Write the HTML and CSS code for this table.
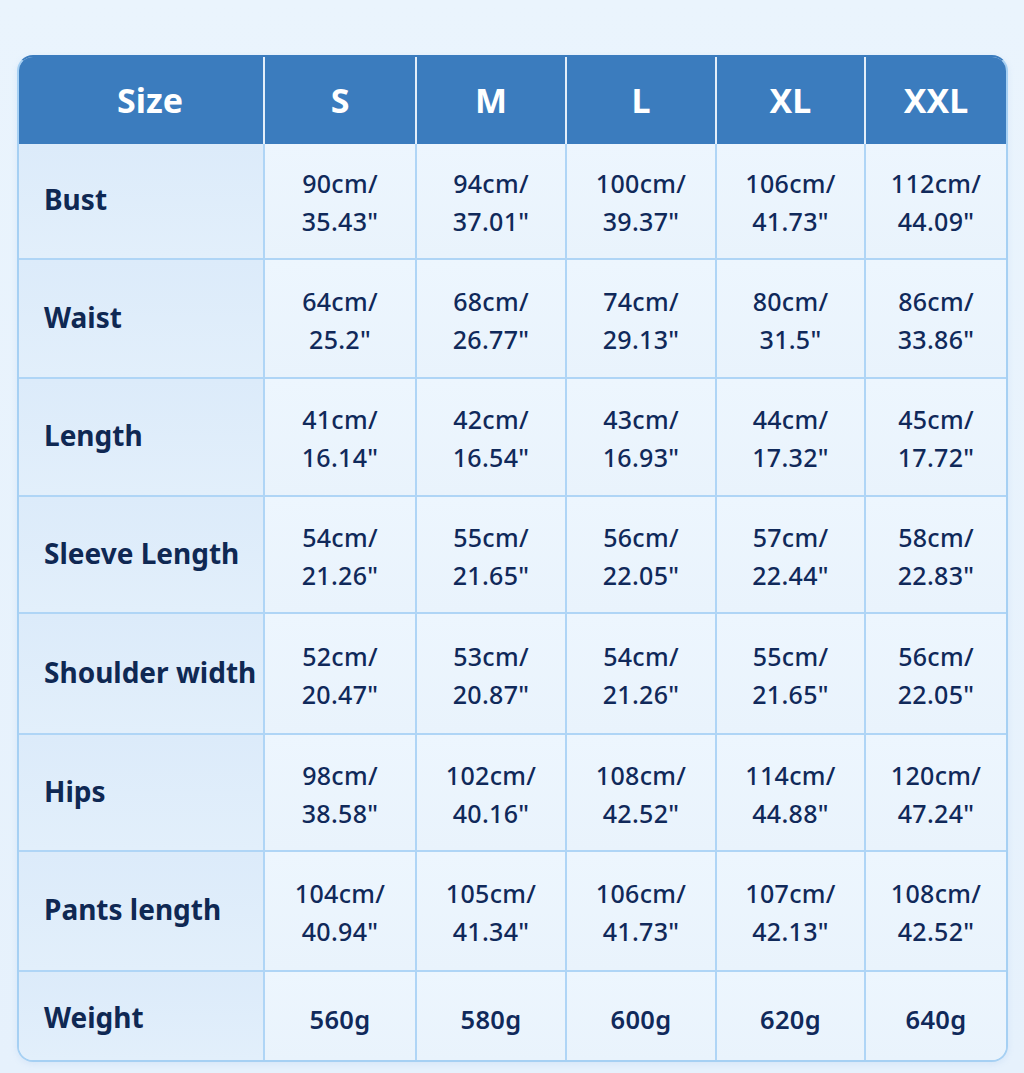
FILE: index.html
```html
<!DOCTYPE html>
<html lang="en">
<head>
<meta charset="utf-8">
<title>Size Chart</title>
<link rel="stylesheet" href="styles.css">
</head>
<body>
<div class="page">
  <div class="chart">
    <div class="cell head first">Size</div>
    <div class="cell head">S</div>
    <div class="cell head">M</div>
    <div class="cell head">L</div>
    <div class="cell head">XL</div>
    <div class="cell head last">XXL</div>

    <div class="cell label">Bust</div>
    <div class="cell val">90cm/<br>35.43"</div>
    <div class="cell val">94cm/<br>37.01"</div>
    <div class="cell val">100cm/<br>39.37"</div>
    <div class="cell val">106cm/<br>41.73"</div>
    <div class="cell val last">112cm/<br>44.09"</div>

    <div class="cell label">Waist</div>
    <div class="cell val">64cm/<br>25.2"</div>
    <div class="cell val">68cm/<br>26.77"</div>
    <div class="cell val">74cm/<br>29.13"</div>
    <div class="cell val">80cm/<br>31.5"</div>
    <div class="cell val last">86cm/<br>33.86"</div>

    <div class="cell label">Length</div>
    <div class="cell val">41cm/<br>16.14"</div>
    <div class="cell val">42cm/<br>16.54"</div>
    <div class="cell val">43cm/<br>16.93"</div>
    <div class="cell val">44cm/<br>17.32"</div>
    <div class="cell val last">45cm/<br>17.72"</div>

    <div class="cell label">Sleeve Length</div>
    <div class="cell val">54cm/<br>21.26"</div>
    <div class="cell val">55cm/<br>21.65"</div>
    <div class="cell val">56cm/<br>22.05"</div>
    <div class="cell val">57cm/<br>22.44"</div>
    <div class="cell val last">58cm/<br>22.83"</div>

    <div class="cell label">Shoulder width</div>
    <div class="cell val">52cm/<br>20.47"</div>
    <div class="cell val">53cm/<br>20.87"</div>
    <div class="cell val">54cm/<br>21.26"</div>
    <div class="cell val">55cm/<br>21.65"</div>
    <div class="cell val last">56cm/<br>22.05"</div>

    <div class="cell label">Hips</div>
    <div class="cell val">98cm/<br>38.58"</div>
    <div class="cell val">102cm/<br>40.16"</div>
    <div class="cell val">108cm/<br>42.52"</div>
    <div class="cell val">114cm/<br>44.88"</div>
    <div class="cell val last">120cm/<br>47.24"</div>

    <div class="cell label">Pants length</div>
    <div class="cell val">104cm/<br>40.94"</div>
    <div class="cell val">105cm/<br>41.34"</div>
    <div class="cell val">106cm/<br>41.73"</div>
    <div class="cell val">107cm/<br>42.13"</div>
    <div class="cell val last">108cm/<br>42.52"</div>

    <div class="cell label bottom">Weight</div>
    <div class="cell val weight bottom">560g</div>
    <div class="cell val weight bottom">580g</div>
    <div class="cell val weight bottom">600g</div>
    <div class="cell val weight bottom">620g</div>
    <div class="cell val weight bottom last">640g</div>
  </div>
</div>
</body>
</html>
```

FILE: styles.css
```css
html, body {
  margin: 0;
  padding: 0;
}
body {
  background: linear-gradient(180deg, #eaf4fd 0%, #e6f1fc 100%);
  font-family: "Noto Sans", "Open Sans", sans-serif;
  color: #10295a;
  width: 1024px;
  height: 1073px;
  overflow: hidden;
}
.page {
  padding: 55px 16px 0 17px;
}
.chart {
  width: 991px;
  box-sizing: border-box;
  display: grid;
  grid-template-columns: 246px 152px 150px 150px 149px 140px;
  grid-template-rows: 87px 116px 119px 118px 117px 121px 117px 120px 88px;
  border: 2px solid #a6d0f3;
  border-top: 2px solid #3b7cbe;
  border-radius: 16px;
  overflow: hidden;
  background: #ecf5fd;
  box-shadow: 0 2px 6px rgba(120, 170, 220, 0.15);
}
.cell {
  box-sizing: border-box;
  display: flex;
  align-items: center;
  justify-content: center;
  text-align: center;
  border-right: 2px solid #afd5f6;
  border-bottom: 2px solid #afd5f6;
}
.cell.last {
  border-right: none;
}
.cell.bottom {
  border-bottom: none;
}
.head {
  background: #3b7cbe;
  color: #ffffff;
  font-weight: 700;
  font-size: 34px;
  border-right: 2px solid #e3eef9;
  border-bottom: none;
  padding-bottom: 2px;
}
.head.first {
  padding-left: 18px;
}
.head.last {
  border-right: none;
}
.label {
  justify-content: flex-start;
  text-align: left;
  padding-left: 25px;
  background: linear-gradient(180deg, #dcebfa 0%, #e2effb 100%);
  font-weight: 700;
  font-size: 28px;
  color: #0f2853;
  padding-bottom: 4px;
}
.label.bottom {
  padding-bottom: 0;
  padding-top: 2px;
}
.val {
  background: linear-gradient(180deg, #edf6fe 0%, #e9f3fc 100%);
  font-weight: 500;
  font-size: 25px;
  line-height: 38px;
  letter-spacing: 0.3px;
  color: #10295a;
  padding-top: 2px;
}
.val.weight {
  font-weight: 600;
  font-size: 25.5px;
  padding-top: 6px;
  padding-bottom: 0;
}
```
